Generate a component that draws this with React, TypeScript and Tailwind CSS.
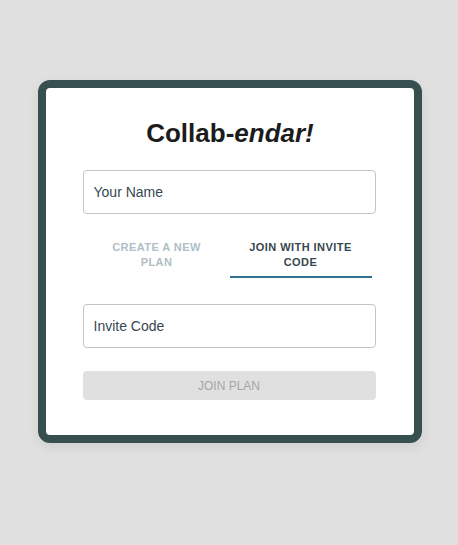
const tabs = [
  { label: 'Create a new plan', active: false },
  { label: 'Join with invite code', active: true },
];

const App = () => (
  <div className="min-h-[545px] bg-[#e0e0e0] flex justify-center pt-[80px] pl-px font-['Liberation_Sans',Arial,sans-serif]">
    <div className="w-[384px] h-[363px] rounded-[12px] border-8 border-[#37504f] bg-white shadow-[0_4px_12px_rgba(0,0,0,0.08)]">
      <div className="pl-[37px] pr-[38px] pt-[30px]">
        <h1 className="text-center text-[26px] leading-[31px] font-bold text-[#1c1c1c] pl-[2px]">
          Collab-<em>endar!</em>
        </h1>

        <input
          placeholder="Your Name"
          className="mt-[21px] block w-full h-[44px] rounded-[4px] border border-[#c4c4c4] px-[10px] text-[14px] text-[#37474f] placeholder:text-[#37474f] outline-none"
        />

        {/* Mode tabs */}
        <div className="mt-[16px] ml-[3px] w-[286px] flex gap-[2px]">
          {tabs.map((tab) => (
            <button
              key={tab.label}
              className={`flex-1 h-[48px] px-3 pt-[3px] text-[11px] leading-[15px] font-bold uppercase tracking-[0.45px] border-b-2 ${
                tab.active
                  ? 'text-[#37474f] border-[#31708e]'
                  : 'text-[#b0bec5] border-transparent'
              }`}
            >
              {tab.label}
            </button>
          ))}
        </div>

        <input
          placeholder="Invite Code"
          className="mt-[26px] block w-full h-[44px] rounded-[4px] border border-[#c4c4c4] px-[10px] text-[14px] text-[#37474f] placeholder:text-[#37474f] outline-none"
        />

        <button
          disabled
          className="mt-[23px] w-full h-[29px] rounded-[4px] bg-[#e0e0e0] text-[12px] uppercase text-[#a6a6a6]"
        >
          Join Plan
        </button>
      </div>
    </div>
  </div>
);

export default App;
